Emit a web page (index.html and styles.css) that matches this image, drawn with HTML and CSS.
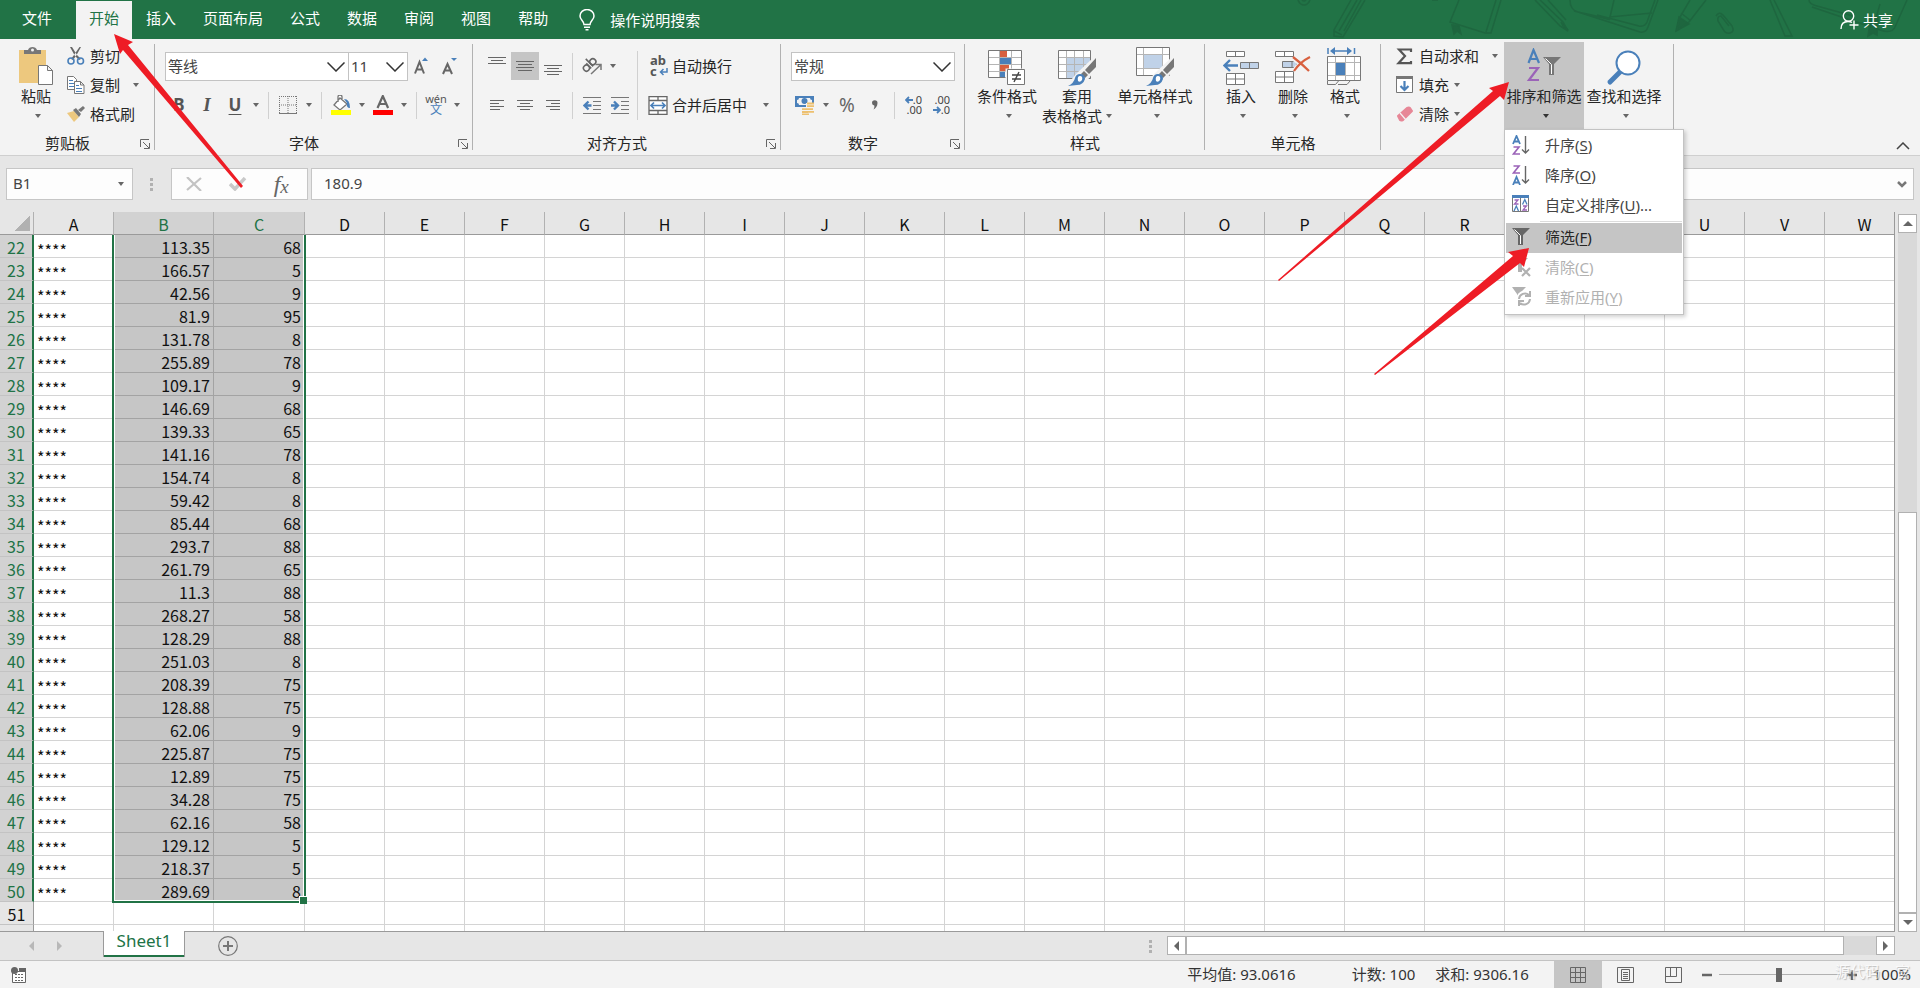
FILE: index.html
```html
<!DOCTYPE html>
<html lang="zh-CN">
<head>
<meta charset="utf-8">
<title>Sheet1</title>
<link rel="stylesheet" href="styles.css">
</head>
<body>
<header class="titlebar">
  <svg class="doodles" width="640" height="39" viewBox="1280 0 640 39" aria-hidden="true">
    <path d="M1298 0q2 5 6 5t6-5M1302 0q2 2 4 0M1351 0l-17 30v6l9 1 22-37M1357 0l-18 31M1361 0l-17 31M1334 31l8 4M1432 0h6"/>
    <path class="solid" d="M1452 25l2 9 3-3 4 3-2-8zM1561 22l7 8-4-2zM1676 31l3-14 10 7z"/>
    <path d="M1459 0l-9 22 35 11h6l10-33M1496 0l-10 32M1540 0l23 22 5 9-8-5-25-26M1548 0l18 20"/>
    <path d="M1570 0q0 10 8 12l62 20q6 1 8-5l10-27M1574 11q35 8 36 9M1614 0l-4 17 42-4M1655 0l-8 22q-2 5-8 4l-42-11"/>
    <path d="M1690 0l-10 17-3 13 12-8 17-22M1681 13l10 8M1716 16q3-5 7-1l9 11q3 6-2 7t-7-4l-5-8q-1-5 3-5l8 10M1770 0l15 36 7 0-18-36M1809 0q0 4 8 6l36 10M1812 7l68 23q12 4 15-3l12-27M1880 4l-8 28"/>
    <path class="solid" d="M1871 16l-3 20 5-3 4 2 1-17z"/>
  </svg>
  <nav class="tabs">
    <button class="tab tab-file">文件</button><button class="tab tab-active">开始</button><button class="tab">插入</button><button class="tab">页面布局</button><button class="tab">公式</button><button class="tab">数据</button><button class="tab">审阅</button><button class="tab">视图</button><button class="tab">帮助</button>
    <button class="tell-me"><svg width="16" height="22" viewBox="0 0 16 22" fill="none" stroke="#fff" stroke-width="1.5"><path d="M5 15.500C5 12 1 11 1 7a7 6.500 0 0 1 14 0c0 4-4 5-4 8.500zM5 18.200h6M6.500 20.700h3"/></svg>操作说明搜索</button>
  </nav>
  <button class="share"><svg width="19" height="20" viewBox="0 0 19 20" fill="none" stroke="#fff" stroke-width="1.400"><circle cx="8.500" cy="6" r="5.200"/><path d="M1 19c0-5 3-7.500 7-7.500 2 0 3 .4 4 1M14 10.500v9M9.500 15h9"/></svg>共享</button>
</header>

<section class="ribbon" aria-label="开始">
  <div class="group g-clip">
    <div class="content">
      <button class="big paste"><span class="pic"><svg width="36" height="40" viewBox="0 0 36 40"><path fill="#edc87e" d="M1 4h27v33H1z"/><path fill="#777" d="M6 8V4h4c1-4 8-4 9 0h4v4z"/><circle cx="14.500" cy="4" r="1.500" fill="#f3f3f3"/><path fill="#fff" stroke="#777" d="M20.500 19.500h9l5 5v14h-14zM29.500 19.500v5h5"/></svg></span><span>粘贴</span><span class="line"><i class="caret"></i></span></button>
      <div class="stack">
        <button class="row-btn"><svg width="18" height="18" viewBox="0 0 18 18"><path fill="#666" d="M3 0l2 0 5 8 4 4-2 1-4-4zM14 0h-1.500L7 8l-3 4 2 1 3-4z"/><g fill="none" stroke="#4a80ba" stroke-width="1.600"><circle cx="4" cy="14" r="3"/><circle cx="13.500" cy="14" r="3"/></g></svg>剪切</button>
        <button class="row-btn"><svg width="18" height="18" viewBox="0 0 18 18" fill="#fff"><path stroke="#777" d="M.5.500h6l3 3v10h-9z"/><path stroke="#4a80ba" d="M2 4.500h4M2 7.500h5M2 10.500h5"/><path stroke="#777" d="M7.500 5.500h6l3.500 3.500v8.500H7.500zM13.500 5.500V9H17"/><path stroke="#4a80ba" d="M9 9.500h3M9 12.500h6M9 15.500h6"/></svg>复制<i class="caret far"></i></button>
        <button class="row-btn"><svg width="18" height="16" viewBox="0 0 18 16"><path fill="#edc87e" d="M0 7l7-2 5 6-5 5z"/><path fill="#777" d="M6 4l3-2 5 6-2 3zM11 4l5-4 2 2-4 4z"/></svg>格式刷</button>
      </div>
    </div>
    <div class="caption"><span>剪贴板</span><button class="launch" aria-label="剪贴板设置"><svg width="10" height="10" viewBox="0 0 10 10"><path d="M.5 8V.5H9M3 3l6 6M9.500 4v5.500H4"/></svg></button></div>
  </div>

  <div class="group g-font">
    <div class="content two">
      <div class="line-tools fonts">
        <label class="combo w-font"><select aria-label="字体"><option>等线</option></select><svg width="18" height="10" viewBox="0 0 18 10"><path d="M.5.500L9 9 17.500.500"/></svg></label>
        <label class="combo w-size"><select aria-label="字号"><option>11</option></select><svg width="18" height="10" viewBox="0 0 18 10"><path d="M.5.500L9 9 17.500.500"/></svg></label>
        <button class="tool grow" aria-label="增大字号"><svg width="16" height="18" viewBox="0 0 16 18"><path fill="none" stroke="#666" stroke-width="2" d="M1 16.500L5.500 5 10 16.500M2.500 12.500h6"/><path fill="#4a80ba" d="M8 4l3-3.500L14 4z"/></svg></button>
        <button class="tool" aria-label="减小字号"><svg width="16" height="18" viewBox="0 0 16 18"><path fill="none" stroke="#666" stroke-width="2" d="M1 17L5.500 7 10 17M2.500 13.500h6"/><path fill="#4a80ba" d="M9 1h6l-3 3z"/></svg></button>
      </div>
      <div class="line-tools styles">
        <button class="tool letter bold">B</button><button class="tool letter italic">I</button><button class="tool letter under">U</button><button class="drop" aria-label="下划线选项"><i class="caret"></i></button><i class="sep"></i>
        <button class="tool" aria-label="边框"><svg width="18" height="18" viewBox="0 0 18 18" fill="none" stroke="#777"><path stroke-dasharray="1 1" d="M0 .5h18M.5 0v18M17.500 0v18M9 0v18M0 9h18"/><path d="M0 17.500h18"/></svg></button><button class="drop" aria-label="边框选项"><i class="caret"></i></button><i class="sep"></i>
        <button class="tool" aria-label="填充颜色"><svg width="20" height="20" viewBox="0 0 20 20"><path fill="#fff" stroke="#777" stroke-width="1.300" d="M9 3l7 6-7 6-6-5zM7 7V2q0-2 2-2t2 2v4"/><path fill="#4a80ba" d="M13 4q6 0 6 9-4 0-3-5z"/><path fill="#ff0" d="M0 15h20v5H0z"/></svg></button><button class="drop" aria-label="填充颜色选项"><i class="caret"></i></button>
        <button class="tool" aria-label="字体颜色"><svg width="20" height="20" viewBox="0 0 20 20"><path fill="none" stroke="#666" stroke-width="2.200" d="M4.500 13L9.800 1l5.300 12M6.500 9h7"/><path fill="red" d="M0 15h20v5H0z"/></svg></button><button class="drop" aria-label="字体颜色选项"><i class="caret"></i></button><i class="sep"></i>
        <button class="tool pinyin"><span>wén</span><b>文</b></button><button class="drop" aria-label="拼音选项"><i class="caret"></i></button>
      </div>
    </div>
    <div class="caption"><span>字体</span><button class="launch" aria-label="字体设置"><svg width="10" height="10" viewBox="0 0 10 10"><path d="M.5 8V.5H9M3 3l6 6M9.500 4v5.500H4"/></svg></button></div>
  </div>

  <div class="group g-align">
    <div class="content">
      <div class="two align-tools">
        <div class="line-tools">
          <button class="tool" aria-label="顶端对齐"><svg class="ln" width="18" height="28"><path d="M0 5.500h18M3 8.500h12M0 11.500h18"/></svg></button><button class="tool on" aria-label="垂直居中"><svg class="ln" width="18" height="28"><path d="M0 9.500h18M2 12.500h14M0 15.500h18M2 18.500h14"/></svg></button><button class="tool" aria-label="底端对齐"><svg class="ln" width="18" height="28"><path d="M0 13.500h18M3 16.500h12M0 19.500h18M3 22.500h12"/></svg></button><i class="sep"></i>
          <button class="tool" aria-label="方向"><svg width="20" height="18" viewBox="0 0 20 18"><g transform="rotate(-45 8 9)" fill="none" stroke="#666" stroke-width="1.600"><circle cx="4" cy="8" r="3"/><path d="M7.200 4.500v7M10 1v10.500"/><circle cx="13" cy="8" r="3"/></g><path fill="none" stroke="#777" stroke-width="1.500" d="M9 17L18.500 8M13.500 7.500H19V13"/></svg></button><button class="drop" aria-label="方向选项"><i class="caret"></i></button>
        </div>
        <div class="line-tools">
          <button class="tool" aria-label="左对齐"><svg class="ln" width="16" height="12"><path d="M1 1.500h14M1 4.500h9M1 7.500h14M1 10.500h10"/></svg></button><button class="tool" aria-label="居中"><svg class="ln" width="16" height="12"><path d="M0 1.500h16M3 4.500h10M0 7.500h16M3 10.500h10"/></svg></button><button class="tool" aria-label="右对齐"><svg class="ln" width="16" height="12"><path d="M1 1.500h14M6 4.500h9M1 7.500h14M5 10.500h10"/></svg></button><i class="sep"></i>
          <button class="tool" aria-label="减少缩进"><svg width="18" height="17" viewBox="0 0 18 17"><path stroke="#777" d="M0 .5h18M10 4.500h8M10 8.500h8M10 12.500h8M0 16.500h18"/><path fill="none" stroke="#4a80ba" stroke-width="2.400" d="M8.500 8.500H2M5.500 4.500l-4 4 4 4"/></svg></button><button class="tool" aria-label="增加缩进"><svg width="18" height="17" viewBox="0 0 18 17"><path stroke="#777" d="M0 .5h18M10 4.500h8M10 8.500h8M10 12.500h8M0 16.500h18"/><path fill="none" stroke="#4a80ba" stroke-width="2.400" d="M0 8.500h6.500M3 4.500l4 4-4 4"/></svg></button>
        </div>
      </div>
      <i class="sep tall"></i>
      <div class="two">
        <button class="row-btn text"><span class="abc">ab<br>c<svg width="9" height="8" viewBox="0 0 9 8"><path fill="none" stroke="#4a80ba" stroke-width="1.500" d="M8 0v4H2M4.500 1L1.500 4l3 3"/></svg></span>自动换行</button>
        <button class="row-btn text"><svg width="20" height="19" viewBox="0 0 20 19" fill="#fff" stroke="#666"><path stroke-width="1.300" d="M1 .6h18v17.800H1zM1 4.500h18M1 14.500h18M10 .5v4M10 14.500v4"/><path fill="none" stroke="#4a80ba" stroke-width="1.700" d="M3 9.500h14M6 6.500l-3 3 3 3M14 6.500l3 3-3 3"/></svg>合并后居中<i class="caret far"></i></button>
      </div>
    </div>
    <div class="caption"><span>对齐方式</span><button class="launch" aria-label="对齐设置"><svg width="10" height="10" viewBox="0 0 10 10"><path d="M.5 8V.5H9M3 3l6 6M9.500 4v5.500H4"/></svg></button></div>
  </div>

  <div class="group g-num">
    <div class="content two">
      <div class="line-tools"><label class="combo w-num"><select aria-label="数字格式"><option>常规</option></select><svg width="18" height="10" viewBox="0 0 18 10"><path d="M.5.500L9 9 17.500.500"/></svg></label></div>
      <div class="line-tools">
        <button class="tool" aria-label="会计数字格式"><svg width="20" height="20" viewBox="0 0 20 20"><path fill="#4a80ba" d="M0 1h19v11H0z"/><path fill="#f3f3f3" d="M2 5q2 0 2-2h11q0 2 2 2v3q-2 0-2 2H4q0-2-2-2z"/><circle cx="9.500" cy="6" r="3" fill="#4a80ba"/><path stroke="#f3f3f3" stroke-width="3" d="M11 9.500h8M11 12h8M7 15h12M6 18h13"/><path stroke="#edc06f" stroke-width="1.800" d="M12 8.500h7M12 11.200h7M7 14.200h11M12 16.800h7M7 17h6M7 19.300h7"/></svg></button><button class="drop" aria-label="货币选项"><i class="caret"></i></button><button class="tool pct">%</button><button class="tool" aria-label="千位分隔样式"><svg width="8" height="10" viewBox="0 0 8 10"><path fill="#666" d="M1 3a2.600 2.600 0 1 1 5.500 0c0 3-2 5.500-4 6.500 1-2 1-3 .8-4A2.600 2.600 0 0 1 1 3z"/></svg></button><i class="sep"></i>
        <button class="tool dec" aria-label="增加小数位数"><span><svg width="8" height="8" viewBox="0 0 8 8"><path fill="none" stroke="#4a80ba" stroke-width="1.800" d="M8 4H1.500M4 1L1 4l3 3"/></svg>.0</span><span>.00</span></button><button class="tool dec" aria-label="减少小数位数"><span>.00</span><span><svg width="8" height="8" viewBox="0 0 8 8"><path fill="none" stroke="#4a80ba" stroke-width="1.800" d="M0 4h6.500M4 1l3 3-3 3"/></svg>.0</span></button>
      </div>
    </div>
    <div class="caption"><span>数字</span><button class="launch" aria-label="数字设置"><svg width="10" height="10" viewBox="0 0 10 10"><path d="M.5 8V.5H9M3 3l6 6M9.500 4v5.500H4"/></svg></button></div>
  </div>

  <div class="group g-style">
    <div class="content bigs">
      <button class="big"><span class="pic"><svg width="38" height="36" viewBox="0 0 38 36"><path fill="#fff" d="M1 1h33v27H1z"/><path fill="#d8603f" d="M12 1h7v6h-7zM12 15h9v6h-9z"/><path fill="#4a80ba" d="M12 8h11v7H12zM12 22h5v6h-5z"/><path fill="none" stroke="#b5b5b5" d="M1 7.500h33M1 14.500h33M1 21.500h33M11.500 1v27M23.500 1v27"/><path fill="none" stroke="#777" d="M.5.500h33v27H.5z"/><path fill="#fff" stroke="#f3f3f3" stroke-width="3" d="M19 20h18v15H19z"/><path fill="#fff" stroke="#777" d="M19.500 19.500h17v15h-17z"/><path stroke="#444" stroke-width="1.400" d="M24 25h9M24 29h9M31 22l-5 10"/></svg></span><span>条件格式</span><span class="line"><i class="caret"></i></span></button>
      <button class="big"><span class="pic"><svg width="38" height="36" viewBox="0 0 38 36"><path fill="#fff" d="M1 1h32v28H1z"/><path fill="#c0d2e8" d="M9 8h24v21H9z"/><path fill="none" stroke="#b5b5b5" d="M1 7.500h32M1 14.500h32M1 21.500h32M8.500 1v28M16.500 1v28M25.500 1v28"/><path fill="none" stroke="#777" d="M.5.500h32v28H.5z"/><use href="#brush"/></svg></span><span>套用</span><span class="line worded">表格格式<i class="caret"></i></span></button>
      <button class="big"><span class="pic"><svg width="38" height="39" viewBox="0 0 38 39"><path fill="#fff" d="M1 1h33v28H1z"/><path fill="#c0d2e8" d="M8 8h19v14H8z"/><path fill="none" stroke="#b5b5b5" d="M1 7.500h33M1 21.500h33M7.500 1v28M26.500 1v28"/><path fill="none" stroke="#777" d="M.5.500h33v28H.5z"/><use href="#brush" y="3"/></svg></span><span>单元格样式</span><span class="line"><i class="caret"></i></span></button>
    </div>
    <div class="caption"><span>样式</span></div>
  </div>

  <div class="group g-cells">
    <div class="content bigs">
      <button class="big"><span class="pic"><svg width="36" height="38" viewBox="0 0 36 38"><path fill="#fff" stroke="#777" d="M3.500 3.500h18v5h-18zM12.500 3.500v5M3.500 25.500h18v11h-18zM12.500 25.500v11M3.500 31h18"/><path fill="#c0d2e8" stroke="#777" d="M17.500 14.500h18v6h-18zM26.500 14.500v6"/><path fill="none" stroke="#f3f3f3" stroke-width="4" d="M14 17.500h3"/><path fill="none" stroke="#4a80ba" stroke-width="2.400" d="M15 17.500H2M7 12l-5.500 5.500L7 23"/></svg></span><span>插入</span><span class="line"><i class="caret"></i></span></button>
      <button class="big"><span class="pic"><svg width="36" height="38" viewBox="0 0 36 38"><path fill="#fff" stroke="#777" d="M.5 3.500h18v5H.5zM9.500 3.500v5M.5 23.500h18v11H.5zM9.500 23.500v11M.5 29h18"/><path fill="#c0d2e8" stroke="#777" d="M7.500 13.500h14v6h-14zM17 13.500v6"/><path fill="none" stroke="#f3f3f3" stroke-width="5" d="M18 10q7 5 16 14M34 9q-8 5-15 14"/><path fill="none" stroke="#d8603f" stroke-width="2.200" d="M18 9q8 6 16 14M35 9q-10 5-16 14"/></svg></span><span>删除</span><span class="line"><i class="caret"></i></span></button>
      <button class="big"><span class="pic"><svg width="36" height="39" viewBox="0 0 36 39"><path fill="#fff" d="M1 10h33v24H1z"/><path fill="none" stroke="#b5b5b5" d="M1 15.500h33M1 28.500h33M8.500 10v24M18.500 10v24M27.500 10v24"/><path fill="#4a80ba" d="M9 16h9v12H9z"/><path fill="none" stroke="#777" d="M.5 9.500h33v24H.5zM.5 34v3.500h8l3-3.500M11 37.500h9l3-3.500"/><path fill="none" stroke="#4a80ba" stroke-width="1.500" d="M1 1v6M27.500 1v6M5 4h19"/><path fill="#4a80ba" d="M3 4l5-4v8zM25 4l-5-4v8z"/></svg></span><span>格式</span><span class="line"><i class="caret"></i></span></button>
    </div>
    <div class="caption"><span>单元格</span></div>
  </div>

  <div class="group g-edit">
    <div class="content">
      <div class="stack">
        <button class="row-btn"><svg width="18" height="17" viewBox="0 0 18 17"><path fill="none" stroke="#555" stroke-width="2.200" d="M15 4V1.500H3L9 8l-6.500 7.200H15V13"/></svg>自动求和<i class="caret far"></i></button>
        <button class="row-btn"><svg width="18" height="18" viewBox="0 0 18 18"><path fill="#fff" stroke="#777" d="M.5 1.500h16v15H.5z"/><path fill="#777" d="M0 0h17v3H0z"/><path fill="none" stroke="#4a80ba" stroke-width="2.200" d="M8.500 5v9M4.500 10l4 4 4-4"/></svg>填充<i class="caret"></i></button>
        <button class="row-btn"><svg width="18" height="16" viewBox="0 0 18 16"><path fill="#e78797" stroke="#e78797" stroke-width="2" stroke-linejoin="round" d="M2 10l9-8q2-1 3 0l2 3-9 9q-2 1-3 0z"/><path stroke="#f3f3f3" stroke-width="1.200" d="M4 7l6 7"/></svg>清除<i class="caret"></i></button>
      </div>
      <div class="menu-anchor">
        <button class="big pressed" aria-expanded="true"><span class="pic"><svg width="38" height="38" viewBox="0 0 38 38"><path fill="none" stroke="#4a80ba" stroke-width="2.200" d="M3.500 15L8.500 2l5.500 13M5.500 11h6.500"/><path fill="none" stroke="#9b63b8" stroke-width="2.200" d="M4 20h9L4 32h10"/><path fill="#777" d="M18 9h18l-7 7v11h-5V16z"/><path fill="none" stroke="#fff" d="M20.500 10.500l6 6V26"/></svg></span><span>排序和筛选</span><span class="line"><i class="caret dark"></i></span></button>
        <div class="menu" role="menu">
          <button role="menuitem"><svg width="18" height="20" viewBox="0 0 18 20"><use href="#a-glyph"/><use href="#z-glyph" y="11"/><use href="#down"/></svg><span>升序(<u>S</u>)</span></button>
          <button role="menuitem"><svg width="18" height="20" viewBox="0 0 18 20"><use href="#z-glyph"/><use href="#a-glyph" y="11"/><use href="#down"/></svg><span>降序(<u>O</u>)</span></button>
          <button role="menuitem"><svg width="18" height="20" viewBox="0 0 18 20"><path fill="#fff" stroke="#777" d="M.5.500h16v16H.5zM8.500 1v16"/><path fill="#4a80ba" d="M0 0h17v3H0z"/><g fill="none" stroke-width="1.300"><path stroke="#9b63b8" d="M2.500 5h3.500L2.500 9H6.500M11 11h3.500L11 15h4"/><path stroke="#4a80ba" d="M2 16l2.300-5L6.500 16M10.500 9.500l2.300-5 2.200 5"/></g></svg><span>自定义排序(<u>U</u>)...</span></button>
          <hr>
          <button role="menuitem" class="hover"><svg width="18" height="20" viewBox="0 0 18 20"><path fill="#666" d="M0 1h18l-7 7v10H6V8z"/><path fill="none" stroke="#fff" d="M2.500 2.500l6 6V17"/></svg><span>筛选(<u>F</u>)</span></button>
          <button role="menuitem" disabled><svg width="20" height="20" viewBox="0 0 20 20"><path fill="#b1b1b1" d="M0 1h16l-6 6v8H6V7z"/><path stroke="#b1b1b1" stroke-width="2.200" d="M10 11l8 8M18 11l-8 8"/></svg><span>清除(<u>C</u>)</span></button>
          <button role="menuitem" disabled><svg width="20" height="20" viewBox="0 0 20 20"><path fill="#b1b1b1" d="M0 0h14L9 5l-3 4v4H5V7z"/><path fill="none" stroke="#fff" stroke-width="4" d="M12 6a6 6 0 1 0 .1 12 6 6 0 0 0 0-12"/><path fill="none" stroke="#b1b1b1" stroke-width="2" d="M7 12a6 6 0 0 1 10-4M18 4v5h-5M18 12a6 6 0 0 1-10 4M7 19v-5h5"/></svg><span>重新应用(<u>Y</u>)</span></button>
        </div>
      </div>
      <button class="big find"><span class="pic"><svg width="36" height="38" viewBox="0 0 36 38"><path stroke="#4a80ba" stroke-width="5" stroke-linecap="round" d="M4 34l10-10"/><circle cx="22" cy="15" r="11.500" fill="#fff" stroke="#4a80ba" stroke-width="2"/></svg></span><span>查找和选择</span><span class="line"><i class="caret"></i></span></button>
    </div>
    <div class="caption"></div>
  </div>
  <button class="collapse" aria-label="折叠功能区"><svg width="14" height="8" viewBox="0 0 14 8"><path fill="none" stroke="#444" stroke-width="1.500" d="M1 7l6-6 6 6"/></svg></button>
</section>

<section class="formula-bar">
  <label class="name-box"><input value="B1" aria-label="名称框"><i class="caret"></i></label>
  <i class="dots"></i>
  <div class="fx-box">
    <button aria-label="取消"><svg width="16" height="14" viewBox="0 0 16 14"><path stroke="#c3c3c3" stroke-width="2.200" d="M1 0l14 14M15 1L1 13"/></svg></button>
    <button aria-label="输入"><svg width="18" height="14" viewBox="0 0 18 14"><path fill="none" stroke="#c9c9c9" stroke-width="3.500" d="M1 7l5 5L16 1"/></svg></button>
    <button class="fx" aria-label="插入函数"><i>f</i><i class="x">x</i></button>
  </div>
  <label class="formula"><input value="180.9" aria-label="编辑栏"><svg width="10" height="7" viewBox="0 0 10 7"><path fill="none" stroke="#777" stroke-width="2.500" d="M1 1l4 4 4-4"/></svg></label>
</section>

<main class="work">
  <div class="sheet">
    <table class="grid">
      <colgroup><col class="c-head"><col class="c-std"><col class="c-b"><col class="c-c"></colgroup>
      <thead><tr></tr></thead>
      <tbody></tbody>
    </table>
    <div class="selection"></div>
  </div>
  <div class="vscroll"><button aria-label="向上滚动"><i class="tri up"></i></button><div class="track"><div class="thumb"></div></div><button aria-label="向下滚动"><i class="tri down"></i></button></div>
</main>

<div class="sheet-bar">
  <button class="nav" aria-label="上一个"><i class="tri left pale"></i></button><button class="nav" aria-label="下一个"><i class="tri right pale"></i></button>
  <button class="sheet-tab">Sheet1</button>
  <button class="add" aria-label="新工作表"><svg width="20" height="20" viewBox="0 0 20 20" fill="none" stroke="#777"><circle cx="10" cy="10" r="9.300" stroke-width="1.200"/><path stroke-width="2" d="M5 10h10M10 5v10"/></svg></button>
  <i class="dots"></i>
  <div class="hscroll"><button aria-label="向左滚动"><i class="tri left"></i></button><div class="track"><div class="thumb"></div></div><button aria-label="向右滚动"><i class="tri right"></i></button></div>
</div>

<footer class="status">
  <svg width="16" height="16" viewBox="0 0 16 16"><path fill="#fff" stroke="#666" d="M1.500 4.500h13v11h-13z"/><path fill="#666" d="M8 1h7v4H8z"/><circle cx="3.500" cy="3.500" r="3.500" fill="#666"/><path stroke="#666" stroke-dasharray="2 1" d="M4 7.500h9M4 10.500h9M4 13.500h9"/></svg>
  <span class="avg">平均值: 93.0616</span><span class="count">计数: 100</span><span class="sum">求和: 9306.16</span>
  <div class="views">
    <button class="on" aria-label="普通"><svg width="16" height="16" viewBox="0 0 16 16"><path d="M.5.500h15v15H.5zM5.500 0v16M10.500 0v16M0 5.500h16M0 10.500h16"/></svg></button>
    <button aria-label="页面布局"><svg width="17" height="16" viewBox="0 0 17 16"><path d="M.5.500h16v15H.5zM4.500 2.500h8v11h-8zM6 5.500h5M6 7.500h5M6 9.500h5M6 11.500h5"/></svg></button>
    <button aria-label="分页预览"><svg width="17" height="16" viewBox="0 0 17 16"><path d="M.5.500h16v15H.5zM5.500 0v9.500M0 9.500h11.500V0"/></svg></button>
  </div>
  <button class="zoom-btn" aria-label="缩小"><svg width="10" height="10"><path d="M0 5h10"/></svg></button>
  <input class="zoom" type="range" value="50" aria-label="缩放">
  <button class="zoom-btn" aria-label="放大"><svg width="10" height="10"><path d="M0 5h10M5 0v10"/></svg></button>
  <span class="pct-label">100%</span>
  <span class="stamp">源代码&emsp;官</span>
</footer>

<svg class="arrows" aria-hidden="true">
  <path d="M114 34l19 8-5 3 115 141-2 2L123 50l-3 4z"/>
  <path d="M1509 82l-5 18-4-4-221 185-1-1 215-189-4-3z"/>
  <path d="M1529 248l-5 19-4-4-145 112-1-1 139-118-5-4z"/>
</svg>
<svg width="0" height="0" class="defs"><defs>
  <g id="brush"><path fill="#f3f3f3" d="M37 6L18 24 8 36h17l13-17z"/><path fill="#777" d="M38 8v9l-7 7-4-4zM26 21l4 4-3 3-4-4z"/><path fill="#4a80ba" d="M22 24q5 0 5 5-2 6-8 6l-9 1q6-3 7-8 1-4 5-4z"/><path fill="#fff" d="M22 26q3 0 2 4-2 3-4 1-1-5 2-5z"/></g>
  <path id="a-glyph" fill="none" stroke="#4a80ba" stroke-width="1.800" d="M1 9l3.500-8L8 9M2.500 6.500h4"/>
  <path id="z-glyph" fill="none" stroke="#9b63b8" stroke-width="1.600" d="M1.500 1H7L1.500 8H8"/>
  <path id="down" fill="none" stroke="#666" stroke-width="1.400" d="M13.500 1v17M10 14.500l3.500 3.500 3.500-3.500"/>
</defs></svg>
<script src="grid.js"></script>
</body>
</html>
```
FILE: styles.css
```css
* { box-sizing: border-box; }
body { margin: 0; min-height: 100vh; display: flex; flex-direction: column; position: relative; overflow: hidden; background: #e6e6e6; color: #262626; font: 15px/20px "Noto Sans", "Noto Sans CJK SC", sans-serif; }
button, input, select { font: inherit; color: inherit; }
button { border: 0; padding: 0; background: none; display: flex; align-items: center; justify-content: center; white-space: nowrap; }
svg { display: block; flex: none; }
.defs { position: absolute; }

/* Title bar */
.titlebar { position: relative; height: 39px; background: #217346; color: #fff; display: flex; justify-content: space-between; }
.doodles { position: absolute; right: 0; top: 0; fill: none; stroke: #1e663f; stroke-width: 1.5; }
.doodles .solid { fill: #1e663f; }
.tabs { display: flex; gap: 1px; padding-top: 1px; }
.tab { padding: 0 13px 4px; }
.tab-file { padding: 0 23px 4px 22px; }
.tab-active { background: #f3f3f3; color: #217346; }
.tell-me { gap: 15px; margin-left: 17px; padding-bottom: 1px; }
.share { position: relative; gap: 4px; margin-right: 27px; }

/* Ribbon */
.ribbon { position: relative; display: flex; height: 117px; background: #f3f3f3; border-bottom: 1px solid #cfcfcf; }
.group { position: relative; display: flex; flex-direction: column; padding-top: 3px; flex: none; }
.group::after { content: ""; position: absolute; right: 0; top: 5px; bottom: 5px; width: 1px; background: #b1b1b1; }
.content { display: flex; height: 87px; }
.caption { display: flex; align-items: center; height: 26px; padding-top: 2px; }
.caption span { flex: 1; text-align: center; }
.launch { width: 20px; height: 22px; padding-top: 2px; }
.launch svg { fill: none; stroke: #666; }
.g-clip { width: 155px; }
.g-font { width: 318px; }
.g-align { width: 308px; }
.g-num { width: 184px; }
.g-style { width: 240px; }
.g-cells { width: 176px; }
.g-edit { width: 293px; }
.caret { display: inline-block; flex: none; border: solid transparent; border-width: 4px 3px 0; border-top-color: #666; }
.caret.dark { border-top-color: #333; }
.big { flex-direction: column; justify-content: flex-start; padding-top: 4px; }
.pic { display: flex; align-items: flex-end; height: 40px; }
.line { display: flex; align-items: center; height: 20px; }
.line .caret { margin-left: 4px; }
.paste { width: 60px; margin-left: 6px; }
.stack { display: flex; flex-direction: column; }
.row-btn { height: 29px; justify-content: flex-start; gap: 5px; }
.stack .row-btn { padding-bottom: 1px; }
.g-clip .row-btn { padding-left: 1px; }
.g-clip .far { margin-left: 8px; }

.two { display: flex; flex-direction: column; gap: 11px; padding-top: 10px; }
.line-tools { display: flex; height: 28px; align-items: center; }
.fonts { padding-left: 10px; }
.styles { padding-left: 10px; }
.tool { width: 28px; height: 28px; flex: none; }
.tool.on { background: #c5c5c5; }
.drop { width: 14px; height: 28px; }
.sep { width: 1px; height: 27px; margin: 0 5px; background: #d0d0d0; flex: none; }
.sep.tall { height: 69px; margin: 9px 10px 0 0; }
.combo { position: relative; height: 29px; background: #fff; }
.combo select { width: 100%; height: 29px; appearance: none; border: 1px solid #c3c3c3; border-radius: 0; background: #fff; padding: 0 2px; color: #444; }
.combo svg { position: absolute; right: 4px; top: 10px; fill: none; stroke: #333; stroke-width: 1.5; pointer-events: none; }
.w-font { width: 184px; }
.w-size { width: 60px; margin-left: -1px; }
.w-num { width: 164px; margin-left: 10px; }
.letter { font-size: 17px; font-weight: bold; color: #555; }
.italic { font-family: "Liberation Serif", serif; font-style: italic; font-size: 19px; }
.under { text-decoration: underline; text-underline-offset: 3px; }
.pinyin { flex-direction: column; font-size: 11px; line-height: 10px; color: #555; }
.pinyin b { font-weight: normal; color: #4a80ba; font-size: 12px; line-height: 12px; }
.ln { fill: none; stroke: #666; }
.align-tools { padding-left: 10px; width: 164px; }
.text { height: 28px; gap: 4px; }
.abc { width: 20px; padding-left: 2px; font-size: 13px; line-height: 11px; color: #555; text-align: left; font-weight: bold; }
.abc svg { display: inline-block; margin-left: 2px; }
.text .far { margin-left: 12px; }
.g-num .line-tools + .line-tools { padding-left: 10px; }
.g-num .sep { margin: 0 2px 0 5px; }
.pct { font-size: 19px; color: #666; }
.dec { flex-direction: column; font-size: 11px; line-height: 10px; color: #444; align-items: flex-end; padding-right: 3px; }
.dec span { display: flex; align-items: center; }
.g-style .bigs { padding-left: 8px; }
.g-style .big { width: 68px; }
.g-style .big + .big { width: 72px; }
.g-style .big + .big + .big { width: 84px; }
.g-cells .bigs { padding-left: 10px; }
.g-cells .big { width: 52px; }
.g-edit .stack { width: 123px; padding-left: 15px; }
.g-edit .far { margin-left: 8px; }
.menu-anchor { position: relative; }
.pressed { width: 80px; height: 87px; background: #c5c5c5; }
.find { width: 80px; }
.collapse { position: absolute; right: 8px; bottom: 3px; width: 18px; height: 12px; }

.menu { position: absolute; z-index: 2; left: 0; top: 100%; width: 180px; padding: 1px; background: #fff; border: 1px solid #c3c3c3; box-shadow: 2px 2px 4px rgba(0, 0, 0, .18); color: #444; }
.menu button { width: 100%; height: 30px; justify-content: flex-start; padding: 0 0 2px 6px; }
.menu button span { width: 137px; margin-left: auto; text-align: left; }
.menu hr { margin: 0 0 1px 34px; border: 0; border-top: 1px solid #dcdcdc; }
.menu .hover { background: #c5c5c5; color: #262626; }
.menu button:disabled { color: #b1b1b1; }
.menu u { text-underline-offset: 2px; }

/* Formula bar */
.formula-bar { display: flex; padding: 12px 6px 11px; height: 56px; }
.formula-bar input { width: 100%; border: 0; outline: 0; background: none; padding: 0 0 2px; }
.name-box, .fx-box, .formula { display: flex; align-items: center; height: 32px; background: #fdfdfd; border: 1px solid #c6c6c6; }
.name-box { width: 127px; padding: 0 8px 0 6px; color: #444; }
.dots { align-self: center; width: 3px; height: 13px; background: repeating-linear-gradient(#b1b1b1 0 3px, transparent 3px 5px); }
.formula-bar .dots { margin: 0 18px 0 17px; }
.fx-box { width: 137px; padding-right: 4px; }
.fx-box button { flex: 1; }
.fx { font: italic 24px/24px "Liberation Serif", serif; color: #666; }
.fx .x { font-size: 19px; padding-top: 5px; }
.formula { flex: 1; margin-left: 3px; padding: 0 6px 0 12px; color: #444; }

/* Worksheet */
.work { flex: 1; display: flex; min-height: 0; }
.sheet { position: relative; flex: 1; overflow: hidden; height: 720px; background: #fff; border-right: 1px solid #9a9a9a; border-bottom: 1px solid #9a9a9a; }
.grid { table-layout: fixed; width: 1905px; border-collapse: separate; border-spacing: 0; font: 16px/20px "Noto Sans CJK SC", sans-serif; color: #111; }
.grid th, .grid td { height: 23px; padding: 2px 3px 0; border: solid #d4d4d4; border-width: 0 1px 1px 0; font-weight: 400; white-space: nowrap; line-height: 20px; overflow: hidden; }
.c-head { width: 34px; }
.c-std { width: 80px; }
.c-b { width: 100px; }
.c-c { width: 91px; }
.grid thead th { background: #e6e6e6; border-bottom-color: #9a9a9a; border-right-color: #b1b1b1; }
.grid tbody th { background: #e6e6e6; border-right-color: #9a9a9a; border-bottom-color: #c3c3c3; padding: 2px 0 0; }
.grid thead .picked, .grid tbody .picked { background: #d2d2d2; color: #217346; }
.grid tbody .picked { border-right: 2px solid #217346; }
.grid td.num { text-align: right; background: #c6c6c6; border-color: #a3a3a3; }
.grid td.mask { padding-top: 8px; line-height: 14px; }
.grid .corner { padding: 0; background: linear-gradient(135deg, transparent 50%, #b1b1b1 50%) 15px 4px / 15px 15px no-repeat #e6e6e6; }
.selection { position: absolute; left: 112px; top: 23px; width: 194px; height: 668px; border: solid #217346; border-width: 0 2px 2px; box-shadow: inset 1px 0 #fff, inset -1px -1px #fff; }
.selection::after { content: ""; position: absolute; right: -3px; bottom: -3px; width: 7px; height: 7px; background: #217346; border: solid #fff; border-width: 1px 0 0 1px; }

.vscroll { display: flex; flex-direction: column; width: 19px; margin: 2px 3px 0; }
.vscroll button, .hscroll button { flex: none; width: 19px; height: 19px; background: #fff; border: 1px solid #b1b1b1; }
.vscroll .track { flex: 1; background: #d9d9d9; display: flex; flex-direction: column; justify-content: flex-end; }
.thumb { background: #fff; border: 1px solid #b1b1b1; }
.vscroll .thumb { height: 59%; }
.tri { border: 5px solid transparent; }
.up { border-top: 0; border-bottom-color: #666; }
.down { border-bottom: 0; border-top-color: #666; }
.left { border-left: 0; border-right-color: #666; }
.right { border-right: 0; border-left-color: #666; }
.left.pale { border-right-color: #b8b8b8; }
.right.pale { border-left-color: #b8b8b8; }

/* Sheet tabs */
.sheet-bar { display: flex; height: 29px; border-bottom: 1px solid #c3c3c3; padding-left: 17px; }
.nav { width: 28px; height: 27px; }
.sheet-tab { position: relative; height: 26px; width: 82px; margin: -1px 0 0 30px; padding: 0 0 6px; background: #fff; border: solid #9a9a9a; border-width: 0 1px; box-shadow: inset 0 -2px #217346; color: #217346; font-size: 17px; }
.add { margin: 4px 0 0 33px; height: 20px; }
.sheet-bar .dots { margin-left: auto; margin-right: 15px; }
.hscroll { display: flex; width: 728px; height: 19px; margin: 4px 25px 0 0; }
.hscroll .track { flex: 1; background: #d9d9d9; display: flex; }
.hscroll .thumb { width: 95.4%; }

/* Status bar */
.status { position: relative; display: flex; align-items: center; height: 27px; padding: 0 9px 0 11px; background: #f3f3f3; color: #333; }
.status span { padding-bottom: 2px; }
.avg { margin-left: auto; }
.count { margin-left: 56px; }
.sum { margin-left: 20px; }
.views { display: flex; margin-left: 25px; }
.views button { width: 48px; height: 27px; }
.views .on { background: #c5c5c5; }
.views svg { fill: none; stroke: #666; }
.zoom-btn { width: 18px; height: 26px; }
.zoom-btn svg { stroke: #666; stroke-width: 2.5; }
.zoom { appearance: none; width: 121px; height: 20px; margin: 0 3px; background: linear-gradient(#b1b1b1, #b1b1b1) center / 100% 1px no-repeat; }
.zoom::-webkit-slider-thumb { appearance: none; width: 6px; height: 14px; background: #666; }
.pct-label { margin-left: 12px; }
.stamp { position: absolute; right: 10px; top: 0; color: #fff; opacity: .6; text-shadow: 1px 1px 1px #999; }

.arrows { position: absolute; z-index: 3; left: 0; top: 0; width: 100%; height: 100%; pointer-events: none; fill: #ee1c25; }
```
FILE: grid.js
```js
const firstRow = 22;
const columns = "ABCDEFGHIJKLMNOPQRSTUVW".split("");
const data = [
  [113.35, 68], [166.57, 5], [42.56, 9], [81.9, 95], [131.78, 8], [255.89, 78],
  [109.17, 9], [146.69, 68], [139.33, 65], [141.16, 78], [154.74, 8], [59.42, 8],
  [85.44, 68], [293.7, 88], [261.79, 65], [11.3, 88], [268.27, 58], [128.29, 88],
  [251.03, 8], [208.39, 75], [128.88, 75], [62.06, 9], [225.87, 75], [12.89, 75],
  [34.28, 75], [62.16, 58], [129.12, 5], [218.37, 5], [289.69, 8]
];

const head = document.querySelector(".grid thead tr");
head.innerHTML = '<th class="corner"></th>' + columns
  .map(c => `<th scope="col"${c === "B" || c === "C" ? ' class="picked"' : ""}>${c}</th>`)
  .join("");

const group = document.querySelector(".grid colgroup");
columns.slice(3).forEach(() => {
  const col = document.createElement("col");
  col.className = "c-std";
  group.append(col);
});

const blanks = n => "<td></td>".repeat(n);
const rows = data.map(([b, c], i) =>
  `<tr><th scope="row" class="picked">${firstRow + i}</th><td class="mask">****</td><td class="num">${b}</td><td class="num">${c}</td>${blanks(20)}</tr>`);
rows.push(`<tr><th scope="row">51</th>${blanks(23)}</tr>`, `<tr><th></th>${blanks(23)}</tr>`);
document.querySelector(".grid tbody").innerHTML = rows.join("");
```
